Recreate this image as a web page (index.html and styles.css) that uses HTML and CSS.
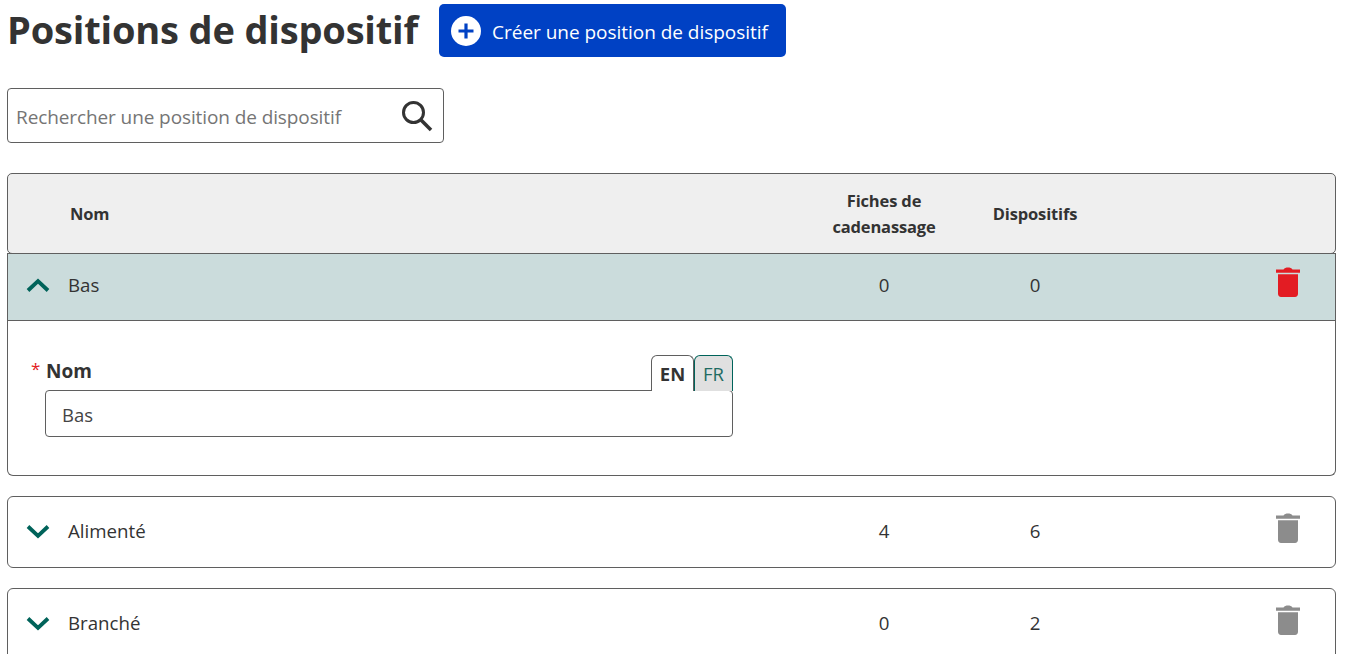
FILE: index.html
```html
<!DOCTYPE html>
<html lang="fr">
<head>
<meta charset="utf-8">
<title>Positions de dispositif</title>
<link rel="stylesheet" href="styles.css">
</head>
<body>
<svg class="defs" width="0" height="0" aria-hidden="true">
  <symbol id="trash" viewBox="0 0 24 32">
    <path d="M0 4.500H7.500C8.500 3 10 2.500 12 2.500C14 2.500 15.500 3 16.500 4.500H24V7.800H0Z"/>
    <path d="M2 9.300H22V28.500C22 30.500 20.800 32 19 32H5C3.200 32 2 30.500 2 28.500Z"/>
  </symbol>
</svg>
<header class="title-row">
  <h1>Positions de dispositif</h1>
  <button class="create-btn" type="button">
    <svg class="plus" viewBox="0 0 30 30" width="30" height="30"><circle cx="15" cy="15" r="15" fill="#fff"/><path d="M15 7.500V22.500M7.500 15H22.500" stroke="#0041c4" stroke-width="3.200" fill="none"/></svg>
    <span class="btn-text">Créer une position de dispositif</span>
  </button>
</header>
<div class="search">
  <span class="placeholder">Rechercher une position de dispositif</span>
  <svg viewBox="0 0 32 32" width="32" height="32"><circle cx="12.500" cy="12.500" r="10" fill="none" stroke="#333" stroke-width="3"/><path d="M19.800 19.800L30 30" stroke="#333" stroke-width="3.600" fill="none"/></svg>
</div>
<section class="table">
  <div class="thead grid">
    <div class="th-name">Nom</div>
    <div class="center">Fiches de<br>cadenassage</div>
    <div class="center">Dispositifs</div>
  </div>
  <article class="item open">
    <div class="row grid active">
      <div class="name"><svg class="chev" viewBox="0 0 24 14" width="24" height="14"><path d="M2 12.500L12 3L22 12.500" fill="none" stroke="#00635a" stroke-width="3.800"/></svg><span>Bas</span></div>
      <div class="center">0</div>
      <div class="center">0</div>
      <svg class="trash red" width="24" height="32"><use href="#trash"/></svg>
    </div>
    <div class="body">
      <div class="field">
        <div class="label-row">
          <label><span class="req">*</span>Nom</label>
          <div class="tabs"><span class="tab on">EN</span><span class="tab off">FR</span></div>
        </div>
        <div class="input">Bas</div>
      </div>
    </div>
  </article>
  <article class="item">
    <div class="row grid">
      <div class="name"><svg class="chev" viewBox="0 0 24 14" width="24" height="14"><path d="M2 1.500L12 11L22 1.500" fill="none" stroke="#00635a" stroke-width="3.800"/></svg><span>Alimenté</span></div>
      <div class="center">4</div>
      <div class="center">6</div>
      <svg class="trash" width="24" height="32"><use href="#trash"/></svg>
    </div>
  </article>
  <article class="item">
    <div class="row grid">
      <div class="name"><svg class="chev" viewBox="0 0 24 14" width="24" height="14"><path d="M2 1.500L12 11L22 1.500" fill="none" stroke="#00635a" stroke-width="3.800"/></svg><span>Branché</span></div>
      <div class="center">0</div>
      <div class="center">2</div>
      <svg class="trash" width="24" height="32"><use href="#trash"/></svg>
    </div>
  </article>
</section>
</body>
</html>
```
FILE: styles.css
```css
* { box-sizing: border-box; }
html, body { height: 654px; overflow: hidden; }
body {
  margin: 0;
  padding: 4px 18px 0 7px;
  background: #fff;
  color: #333;
  font-family: "Open Sans", "Noto Sans", sans-serif;
  font-size: 18px;
}
.defs { display: block; height: 0; }
.title-row { display: flex; align-items: flex-start; gap: 21px; height: 53px; }
h1 { margin: 0; font-size: 38px; font-weight: 700; line-height: 50px; letter-spacing: -0.170px; white-space: nowrap; }
.create-btn {
  display: flex; align-items: center; gap: 11px;
  width: 347px; height: 53px; padding: 0 0 0 12px;
  background: #0041c4; color: #fff; border: 0; border-radius: 5px;
  font: inherit; font-size: 19px; letter-spacing: -0.030px;
}
.btn-text { padding-top: 2px; }
.search {
  display: flex; align-items: center; justify-content: space-between;
  width: 437px; height: 55px; margin-top: 31px; padding: 0 10px 0 8px;
  border: 1px solid #5f5f5f; border-radius: 4px;
}
.placeholder { color: #757575; font-size: 19px; letter-spacing: -0.100px; padding-top: 2px; }
.table { margin-top: 30px; }
.grid { display: grid; grid-template-columns: 801px 150px 152px 1fr; align-items: center; }
.center { text-align: center; }
.thead {
  height: 81px; background: #efefef; border: 1px solid #5f5f5f; border-radius: 5px;
  font-weight: 700; font-size: 16.500px; line-height: 26px; letter-spacing: -0.150px;
}
.thead .th-name { padding-left: 62px; }
.item { border: 1px solid #5f5f5f; border-radius: 6px; margin-top: 20px; }
.item.open { margin-top: -1px; border-radius: 0 0 6px 6px; border-top: 0; height: 223px; }
.row { height: 70px; padding-bottom: 4px; font-size: 18.700px; }
.row.active { height: 68px; padding-bottom: 6px; background: #cbdcdc; border-top: 1px solid #5f5f5f; border-bottom: 1px solid #5f5f5f; }
.name { display: flex; align-items: center; gap: 18px; padding-left: 18px; }
.chev { display: block; margin-top: 4px; }
.active .chev { margin-top: 2px; }
.trash { justify-self: end; margin: 0 35px 6px 0; fill: #8c8c8c; }
.trash.red { fill: #e31c23; margin-bottom: 7px; }
.body { padding: 34px 0 0 37px; }
.field { width: 688px; }
.label-row { display: flex; justify-content: space-between; align-items: flex-start; height: 35px; }
label { font-weight: 700; font-size: 19px; line-height: 32px; position: relative; margin-left: 1px; }
.req { position: absolute; left: -15px; top: -2px; color: #e31c23; font-weight: 400; font-size: 17px; }
.tabs { display: flex; }
.tab { display: flex; align-items: center; justify-content: center; height: 36px; font-size: 18.500px; border-radius: 6px 6px 0 0; border: 1px solid #5f5f5f; border-bottom: 0; position: relative; }
.tab.on { width: 43px; font-weight: 700; background: #fff; z-index: 1; }
.tab.off { width: 39px; background: #e0e0e0; color: #1f6b62; border-color: #00635a; }
.input {
  display: flex; align-items: center; height: 47px; padding: 2px 0 0 16px;
  border: 1px solid #5f5f5f; border-radius: 4px;
  font-size: 18.500px; color: #444;
}
```
